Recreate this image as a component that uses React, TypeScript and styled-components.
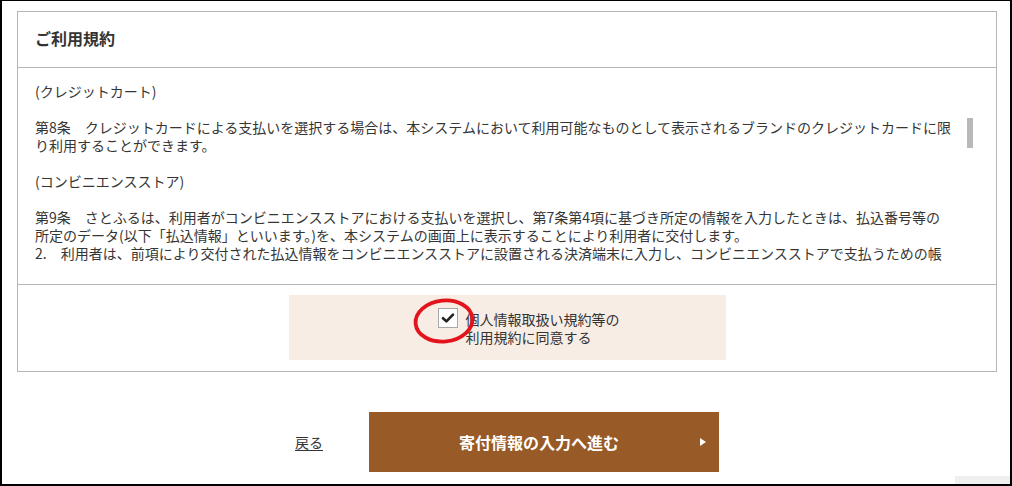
import React from "react";
import styled, { createGlobalStyle } from "styled-components";

const GlobalStyle = createGlobalStyle`
  html, body { margin: 0; padding: 0; background: #fff; }
  body {
    font-family: "Noto Sans CJK JP", "Noto Sans", sans-serif;
    color: #333;
  }
  *, *::before, *::after { box-sizing: border-box; }
`;

const Frame = styled.div`
  position: relative;
  width: 1012px;
  height: 486px;
  border: 2px solid #000;
  border-top-width: 1px;
  padding: 10px 13px 0 15px;
  background: #fff;
  overflow: hidden;
`;

const Panel = styled.section`
  border: 1px solid #b5b5b5;
`;

const PanelHeader = styled.h2`
  margin: 0;
  height: 56px;
  padding: 0 17px 3px;
  display: flex;
  align-items: center;
  border-bottom: 1px solid #b5b5b5;
  font-size: 16px;
  font-weight: 700;
  color: #333;
`;

const TermsBody = styled.div`
  display: flex;
  gap: 6px;
  padding: 14px 23px 21px 17px;
  border-bottom: 1px solid #b5b5b5;
`;

const TermsText = styled.div`
  flex: 1;
  height: 181px;
  overflow: hidden;
  font-size: 14px;
  line-height: 18px;
  color: #363636;
  white-space: nowrap;
`;

const Para = styled.p`
  margin: 0 0 18px;
`;

const ScrollTrack = styled.div`
  flex: none;
  width: 6px;
`;

const ScrollThumb = styled.div`
  margin-top: 36px;
  height: 30px;
  background: #b9b9b9;
`;

const AgreeSection = styled.div`
  display: flex;
  justify-content: center;
  padding: 10px 0 11px;
`;

const AgreeBox = styled.div`
  width: 437px;
  height: 65px;
  background: #f8ede5;
  display: flex;
  align-items: center;
  padding-left: 149px;
`;

const AgreeLabel = styled.label`
  display: flex;
  align-items: flex-start;
  gap: 8px;
  font-size: 14px;
  line-height: 18px;
  color: #333;
  cursor: pointer;
`;

const CheckWrap = styled.span`
  position: relative;
  flex: none;
  width: 20px;
  height: 20px;
  margin-top: -2px;
  border: 1px solid #a8a8a8;
  background: #fff;
  display: flex;
  align-items: center;
  justify-content: center;
`;

const Annotation = styled.svg`
  position: absolute;
  left: -26px;
  top: -12px;
  pointer-events: none;
  overflow: visible;
`;

const Actions = styled.div`
  display: flex;
  justify-content: center;
  align-items: center;
  gap: 46px;
  margin-top: 40px;
`;

const BackLink = styled.a`
  font-size: 14px;
  color: #333;
  text-decoration: underline;
  text-underline-offset: 2px;
  cursor: pointer;
`;

const NextButton = styled.button`
  position: relative;
  width: 350px;
  height: 60px;
  border: none;
  background: #985a26;
  color: #fff;
  font-family: inherit;
  font-size: 16px;
  font-weight: 700;
  padding: 0 10px 0 0;
  cursor: pointer;

  &::after {
    content: "";
    position: absolute;
    right: 13px;
    top: 50%;
    margin-top: -4px;
    border-left: 6px solid #fff;
    border-top: 4px solid transparent;
    border-bottom: 4px solid transparent;
  }
`;

const PageTop = styled.div`
  position: absolute;
  right: 0;
  bottom: 0;
  width: 55px;
  height: 8px;
  background: #efefef;
`;

export default function App() {
  return (
    <>
      <GlobalStyle />
      <Frame>
        <Panel>
          <PanelHeader>ご利用規約</PanelHeader>
          <TermsBody>
            <TermsText>
              <Para>(クレジットカート)</Para>
              <Para>
                第8条　クレジットカードによる支払いを選択する場合は、本システムにおいて利用可能なものとして表示されるブランドのクレジットカードに限
                <br />
                り利用することができます。
              </Para>
              <Para>(コンビニエンスストア)</Para>
              <Para>
                第9条　さとふるは、利用者がコンビニエンスストアにおける支払いを選択し、第7条第4項に基づき所定の情報を入力したときは、払込番号等の
                <br />
                所定のデータ(以下「払込情報」といいます。)を、本システムの画面上に表示することにより利用者に交付します。
                <br />
                2.　利用者は、前項により交付された払込情報をコンビニエンスストアに設置される決済端末に入力し、コンビニエンスストアで支払うための帳
              </Para>
            </TermsText>
            <ScrollTrack>
              <ScrollThumb />
            </ScrollTrack>
          </TermsBody>
          <AgreeSection>
            <AgreeBox>
              <AgreeLabel>
                <CheckWrap>
                  <svg width="14" height="12" viewBox="0 0 14 12">
                    <path
                      d="M2 6.2 L5.4 9.4 L12 2.6"
                      fill="none"
                      stroke="#222"
                      strokeWidth="2.6"
                      strokeLinecap="round"
                      strokeLinejoin="round"
                    />
                  </svg>
                  <Annotation width="64" height="48" viewBox="0 0 64 48">
                    <ellipse
                      cx="31"
                      cy="24"
                      rx="28.5"
                      ry="20.5"
                      fill="none"
                      stroke="#e3141c"
                      strokeWidth="3.8"
                      transform="rotate(-6 31 24)"
                    />
                  </Annotation>
                </CheckWrap>
                <span>
                  個人情報取扱い規約等の
                  <br />
                  利用規約に同意する
                </span>
              </AgreeLabel>
            </AgreeBox>
          </AgreeSection>
        </Panel>
        <Actions>
          <BackLink>戻る</BackLink>
          <NextButton type="button">寄付情報の入力へ進む</NextButton>
        </Actions>
        <PageTop />
      </Frame>
    </>
  );
}
